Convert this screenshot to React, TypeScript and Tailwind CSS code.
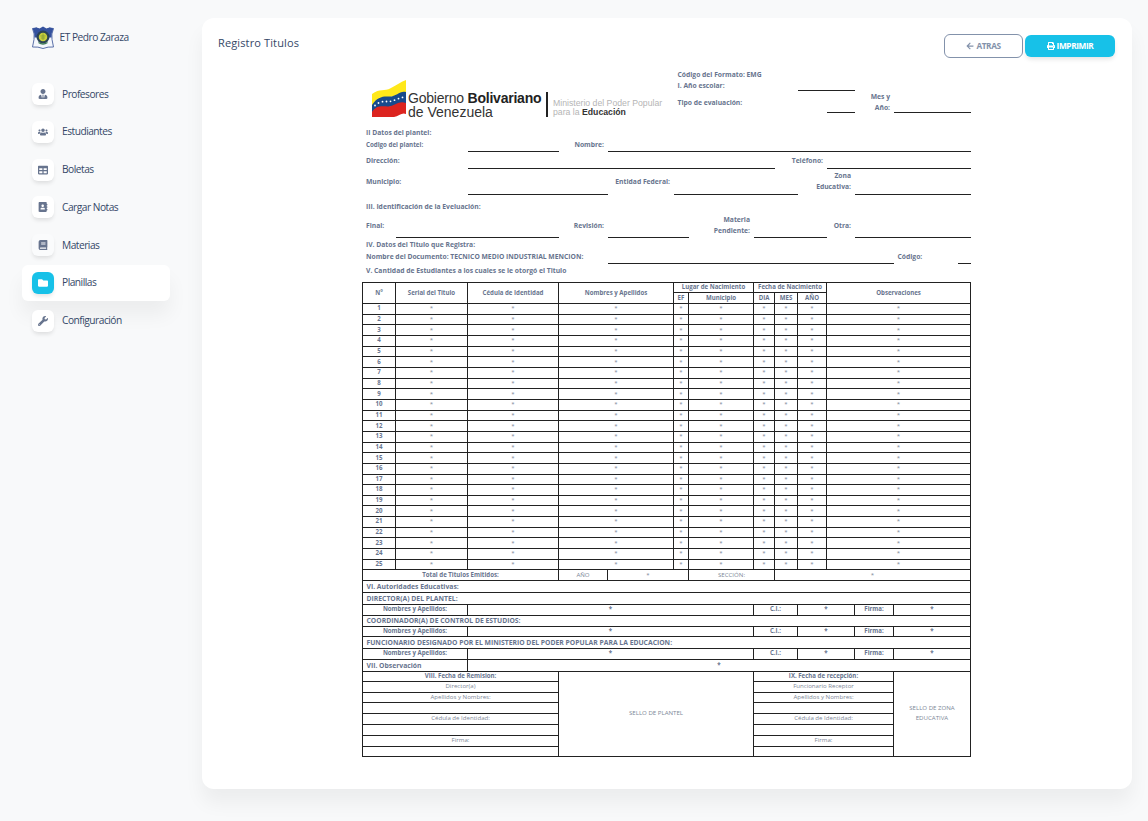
import React from "react";
import { FaUserTie, FaUsers, FaTable, FaAddressBook, FaBook, FaFolder, FaWrench, FaPrint, FaArrowLeft } from "react-icons/fa";

const COLS = "grid grid-cols-[33px_72px_91px_49px_66px_15px_65px_21px_23px_29px_28px_39px_77px]";

const nav = [
  { label: "Profesores", icon: FaUserTie, box: "bg-white" },
  { label: "Estudiantes", icon: FaUsers, box: "bg-white" },
  { label: "Boletas", icon: FaTable, box: "bg-white" },
  { label: "Cargar Notas", icon: FaAddressBook, box: "bg-white" },
  { label: "Materias", icon: FaBook, box: "bg-[#fafbfc]" },
  { label: "Planillas", icon: FaFolder, box: "bg-[#17c1e8]", active: true },
  { label: "Configuración", icon: FaWrench, box: "bg-white" },
];

function Crest() {
  return (
    <svg viewBox="0 0 44 46" className="h-[23px] w-[22px]">
      <path d="M1 5 L9 4 Q22 12 35 4 L43 5 Q38 16 40 27 L43 42 Q32 41 22 45 Q12 41 1 42 L4 27 Q6 16 1 5Z" fill="#f4f7fc" stroke="#5a70a8" strokeWidth="2" />
      <path d="M1 5 L9 3 L15 5 L22 1 L29 5 L35 3 L43 5 Q38 14 39 23 L5 23 Q6 14 1 5Z" fill="#35529e" />
      <circle cx="22" cy="22" r="13" fill="#2c4456" />
      <circle cx="22" cy="22" r="8.5" fill="#c9cf3a" />
      <path d="M17 20h10M18 24h8M22 15v13" stroke="#7f9a3a" strokeWidth="1.5" />
      <path d="M13 33 Q22 39 31 33" stroke="#3f7a57" strokeWidth="2.5" fill="none" />
    </svg>
  );
}

function Sidebar() {
  return (
    <aside className="w-[202px] shrink-0 pl-[22px] pt-[26px]">
      <div className="flex items-center pl-[10px]">
        <Crest />
        <span className="-mt-[2px] ml-[5.5px] text-[10.2px] leading-[16px] tracking-[-0.5px] text-[#344767]">ET Pedro Zaraza</span>
      </div>
      <nav className="mt-[27px] flex flex-col gap-[1.8px]">
        {nav.map(({ label, icon: Icon, box, active }) => (
          <a
            key={label}
            className={
              "flex h-[36px] w-[148px] items-center pl-[10px] " +
              (active ? "rounded-[6px] bg-white shadow-[0_14px_19px_0_rgba(0,0,0,0.05)]" : "")
            }
          >
            <span
              className={
                "flex h-[22px] w-[22px] items-center justify-center rounded-[6px] text-[10px] shadow-[0_3px_4px_-1px_rgba(20,20,20,0.12)] " +
                box +
                (active ? " text-white" : " text-[#67748e]")
              }
            >
              <Icon />
            </span>
            <span className="-mt-px ml-[8px] text-[10.2px] leading-[16px] tracking-[-0.5px] text-[#344767]">{label}</span>
          </a>
        ))}
      </nav>
    </aside>
  );
}

function Flag() {
  return (
    <svg viewBox="0 0 36 40" className="h-[40px] w-[36px] shrink-0">
      <path d="M1 15 C9 9 13 13 20 9 C26 6 29 3 35 1 L35 14 C29 13 25 18 18 18 C11 18 6 21 1 27Z" fill="#ffe81a" />
      <path d="M1 26 C6 18 12 17 18 17.5 C25 18 29 11 35 13 L35 25 C28 24 25 27 18 28 C11 28 5 27 1 34Z" fill="#174a8c" />
      <path d="M1 33 C5 26 11 27 17 27.5 C24 27 28 21 35 24 L35 35 C31 33 28 37 23 38 L1 38Z" fill="#dc241f" />
      {[[4, 26.5], [7.5, 24], [11.5, 22.7], [15.5, 22.5], [19.5, 22.3], [23.5, 21.2], [27.5, 19.6], [31.5, 18.4]].map(([x, y]) => (
        <circle key={x} cx={x} cy={y} r="0.9" fill="#fff" />
      ))}
    </svg>
  );
}

function Logo() {
  return (
    <div className="col-span-6 row-span-4 flex items-start pl-[8px] pt-[13px] font-['Liberation_Sans',sans-serif] font-normal">
      <Flag />
      <div className="mt-[12px] ml-px w-[134px] whitespace-nowrap text-[14px] leading-[14px] text-[#333]">
        <div className="tracking-[-0.22px]">Gobierno <b className="text-[#222]">Bolivariano</b></div>
        <div>de Venezuela</div>
      </div>
      <div className="ml-[4px] mt-[13px] h-[25px] w-[2px] shrink-0 bg-[#222]" />
      <div className="ml-[5px] mt-[20px] whitespace-nowrap text-[8.7px] leading-[9px] text-[#b5b5b5]">
        <div>Ministerio del Poder Popular</div>
        <div>para la <b className="text-[#333]">Educación</b></div>
      </div>
    </div>
  );
}

function L({ c, children }: { c: string; children?: React.ReactNode }) {
  return <div className={"flex items-center whitespace-nowrap pl-[3px] pr-[4px] " + c}>{children}</div>;
}
function U({ c }: { c: string }) {
  return <div className={"border-b border-[#222] " + c} />;
}

function FormHeader() {
  return (
    <div className={COLS + " ml-px grid-rows-[14px_11px_22px_13px_12px_14px_17px_26px_18px_25px_12px_14px_18px] text-[6.75px] font-bold leading-[11px]"}>
      <Logo />
      <L c="col-span-7 -ml-[14.5px] pt-[3px]">Código del Formato: EMG</L>
      <L c="col-span-3 -ml-[14.5px]">I. Año escolar:</L>
      <U c="col-span-2" />
      <div className="col-span-2" />
      <L c="col-span-4 -ml-[14.5px]">Tipo de evaluación:</L>
      <U c="" />
      <L c="justify-end text-right">Mes y<br />Año:</L>
      <U c="" />
      <div className="col-span-7" />

      <L c="col-span-13">II Datos del plantel:</L>

      <L c="col-span-2 pb-[2px] text-[6.2px]">Codigo del plantel:</L>
      <U c="" />
      <L c="justify-end pb-[2px]">Nombre:</L>
      <U c="col-span-9" />

      <L c="col-span-2">Dirección:</L>
      <U c="col-span-6" />
      <L c="col-span-2 justify-end">Teléfono:</L>
      <U c="col-span-3" />

      <L c="col-span-2 pb-[2px]">Municipio:</L>
      <U c="col-span-2" />
      <L c="justify-end pb-[2px]">Entidad Federal:</L>
      <U c="col-span-4" />
      <L c="col-span-2 justify-end pb-[2px] text-right">Zona<br />Educativa:</L>
      <U c="col-span-2" />

      <L c="col-span-13 pt-[5px]">III. Identificación de la Eveluación:</L>

      <L c="pb-[1px]">Final:</L>
      <U c="col-span-2" />
      <L c="justify-end pb-[1px]">Revisión:</L>
      <U c="col-span-2" />
      <L c="justify-end pb-[2px] text-right">Materia<br />Pendiente:</L>
      <U c="col-span-3" />
      <L c="justify-end pb-[1px]">Otra:</L>
      <U c="col-span-2" />

      <L c="col-span-13">IV. Datos del Titulo que Registra:</L>

      <L c="col-span-4 pb-px">Nombre del Documento: TECNICO MEDIO INDUSTRIAL MENCION:</L>
      <U c="col-span-8" />
      <div className="flex justify-between">
        <span className="pl-[3.5px] pt-px">Código:</span>
        <span className="w-[13px] border-b border-[#222]" />
      </div>

      <L c="col-span-13 pb-[6px]">V. Cantidad de Estudiantes a los cuales se le otorgó el Titulo</L>
    </div>
  );
}

function Cell({ c = "", children }: { c?: string; children?: React.ReactNode }) {
  return (
    <div className={"flex items-center justify-center overflow-hidden whitespace-nowrap border-b border-r border-[#222] pb-[2px] " + c}>
      {children}
    </div>
  );
}

function Authority({ title, h }: { title: string; h: string }) {
  return (
    <div className={COLS + " font-bold text-[#67748e] " + h}>
      <Cell c="col-span-13 !justify-start !pb-0 pl-[3.5px] text-[6.8px]">{title}</Cell>
      <Cell c="col-span-2">Nombres y Apellidos:</Cell>
      <Cell c="col-span-5">*</Cell>
      <Cell c="col-span-2">C.I.:</Cell>
      <Cell c="col-span-2">*</Cell>
      <Cell>Firma:</Cell>
      <Cell>*</Cell>
    </div>
  );
}

function Lines({ c, items }: { c: string; items: string[] }) {
  return (
    <div className={"grid grid-rows-[10px_11px_10px_11px_11px_11px_11px_10px] " + c}>
      {items.map((t, i) => (
        <Cell key={i} c={i === 0 ? "font-bold text-[#67748e]" : ""}>{t}</Cell>
      ))}
    </div>
  );
}

function RecordTable() {
  return (
    <div className="w-[609px] border-l border-t border-[#222] text-[6.1px] leading-[9px] text-[#7d8797]">
      <div className={COLS + " grid-rows-[10px_11px] font-bold text-[#67748e]"}>
        <Cell c="row-span-2">N°</Cell>
        <Cell c="row-span-2">Serial del Titulo</Cell>
        <Cell c="row-span-2">Cédula de Identidad</Cell>
        <Cell c="col-span-2 row-span-2">Nombres y Apellidos</Cell>
        <Cell c="col-span-2">Lugar de Nacimiento</Cell>
        <Cell c="col-span-3">Fecha de Nacimiento</Cell>
        <Cell c="col-span-3 row-span-2">Observaciones</Cell>
        <Cell>EF</Cell>
        <Cell>Municipio</Cell>
        <Cell>DIA</Cell>
        <Cell>MES</Cell>
        <Cell>AÑO</Cell>
      </div>
      {Array.from({ length: 25 }, (_, i) => (
        <div key={i} className={COLS + " h-[10.66px] grid-rows-1"}>
          <Cell c="font-bold text-[#67748e]">{i + 1}</Cell>
          <Cell>*</Cell>
          <Cell>*</Cell>
          <Cell c="col-span-2">*</Cell>
          <Cell>*</Cell>
          <Cell>*</Cell>
          <Cell>*</Cell>
          <Cell>*</Cell>
          <Cell>*</Cell>
          <Cell c="col-span-3">*</Cell>
        </div>
      ))}
      <div className={COLS + " h-[10.5px] grid-rows-1"}>
        <Cell c="col-span-3 font-bold text-[#67748e]">Total de Titulos Emitidos:</Cell>
        <Cell>AÑO</Cell>
        <Cell c="col-span-2">*</Cell>
        <Cell c="col-span-2">SECCIÓN:</Cell>
        <Cell c="col-span-5">*</Cell>
      </div>
      <Cell c="h-[12px] !justify-start !pb-0 pl-[3.5px] text-[6.8px] font-bold text-[#67748e]">VI. Autoridades Educativas:</Cell>
      <Authority title="DIRECTOR(A) DEL PLANTEL:" h="grid-rows-[12px_11px]" />
      <Authority title="COORDINADOR(A) DE CONTROL DE ESTUDIOS:" h="grid-rows-[11px_10px]" />
      <Authority title="FUNCIONARIO DESIGNADO POR EL MINISTERIO DEL PODER POPULAR PARA LA EDUCACION:" h="grid-rows-[12px_11px]" />
      <div className={COLS + " h-[12px] grid-rows-1 font-bold text-[#67748e]"}>
        <Cell c="col-span-2 !justify-start !pb-0 pl-[3.5px] text-[6.8px]">VII. Observación</Cell>
        <Cell c="col-span-11">*</Cell>
      </div>
      <div className={COLS}>
        <Lines c="col-span-3" items={["VIII. Fecha de Remision:", "Director(a)", "Apellidos y Nombres:", "", "Cédula de Identidad:", "", "Firma:", ""]} />
        <Cell c="col-span-4">SELLO DE PLANTEL</Cell>
        <Lines c="col-span-5" items={["IX. Fecha de recepción:", "Funcionario Receptor", "Apellidos y Nombres:", "", "Cédula de Identidad:", "", "Firma:", ""]} />
        <Cell c="text-center leading-[10px]">SELLO DE ZONA<br />EDUCATIVA</Cell>
      </div>
    </div>
  );
}

export default function App() {
  return (
    <div className="flex h-[821px] w-[1148px] overflow-hidden bg-[#f8f9fa] font-['Open_Sans',sans-serif] text-[#67748e]">
      <Sidebar />
      <main className="mt-[18px] h-[771px] w-[930px] rounded-[12px] bg-white shadow-[0_14px_19px_0_rgba(0,0,0,0.05)]">
        <header className="flex h-[48px] items-start pl-[16px] pr-[17px] pt-[16px]">
          <h1 className="flex-1 text-[11px] leading-[18px] tracking-[0.13px] text-[#344767]">Registro Titulos</h1>
          <button className="flex h-[24px] w-[79px] items-center justify-center gap-[2px] rounded-[6px] border border-[#8392ab] text-[8.3px] font-bold tracking-[-0.45px] text-[#8392ab]">
            <FaArrowLeft className="text-[8px]" />ATRAS
          </button>
          <button className="ml-[2px] mt-px flex h-[22px] w-[90px] items-center justify-center gap-[2px] rounded-[6px] bg-[#17c1e8] text-[8.3px] font-bold tracking-[-0.4px] text-white shadow-[0_3px_5px_-1px_rgba(0,0,0,0.12)]">
            <FaPrint className="text-[8px]" />IMPRIMIR
          </button>
        </header>
        <div className="ml-[160px] w-[609px]">
          <FormHeader />
          <RecordTable />
        </div>
      </main>
    </div>
  );
}
